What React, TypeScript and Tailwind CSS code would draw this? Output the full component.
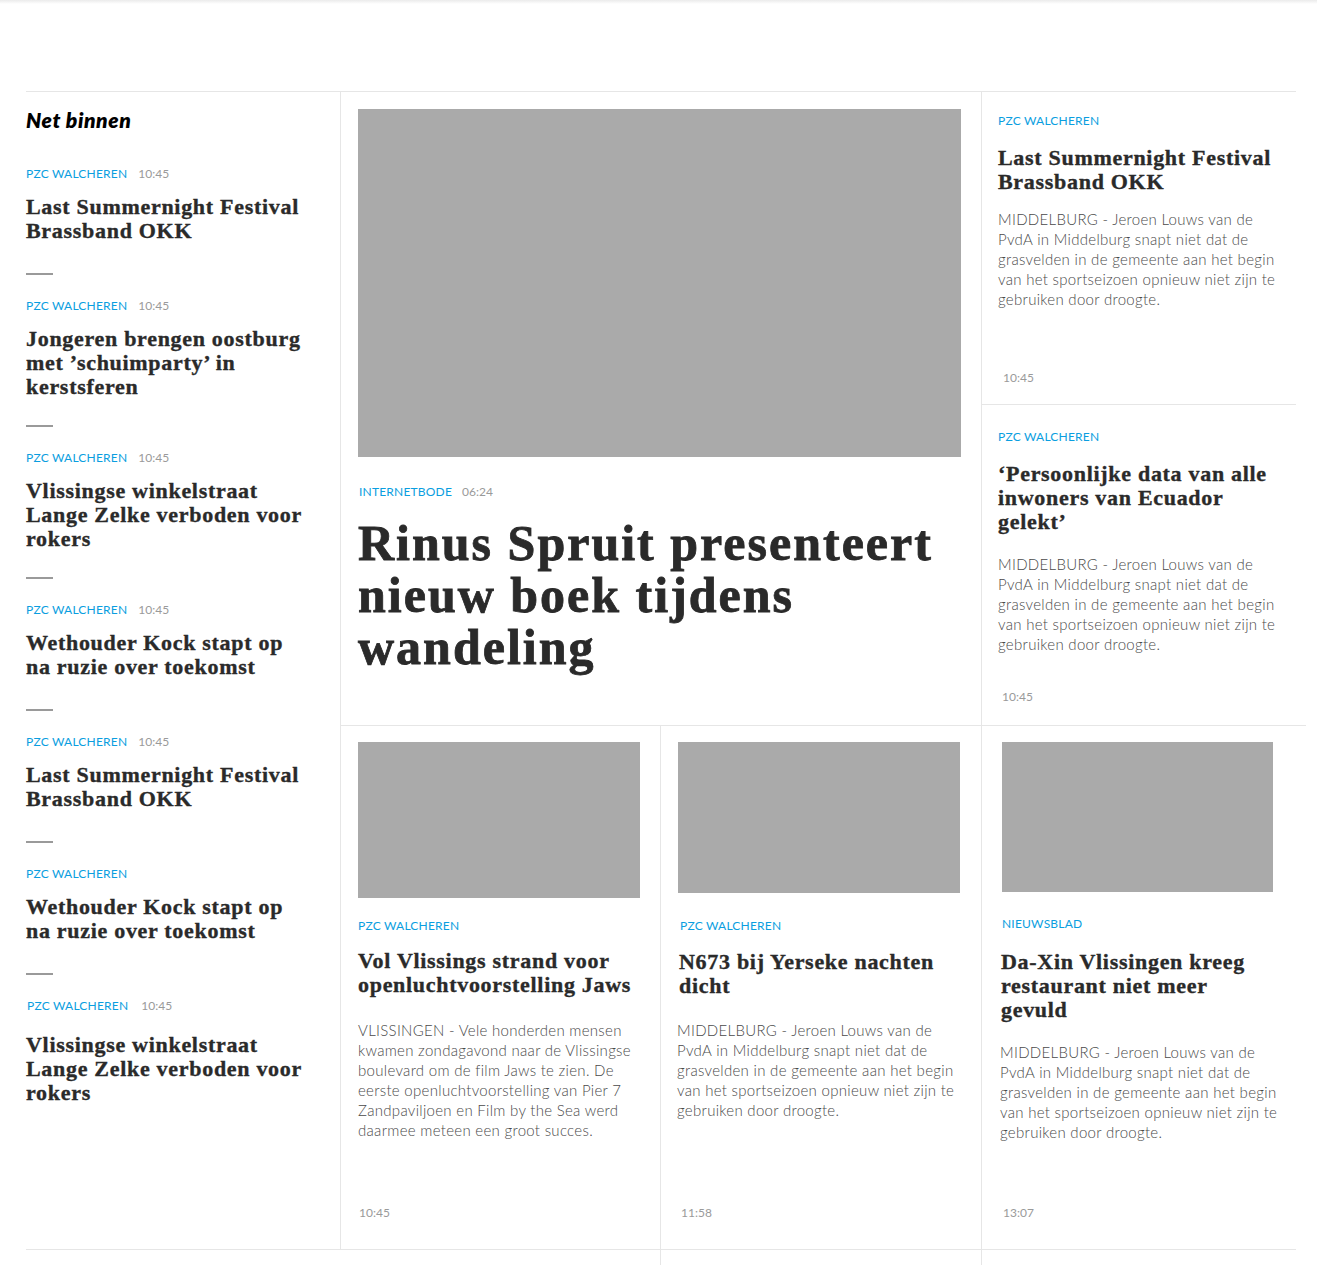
import React from "react";

const SERIF = "font-['Liberation_Serif',serif]";
const SANS = "font-['Lato',sans-serif]";

function Meta({ src, time, gap = "gap-[11px]" }: { src: string; time?: string; gap?: string }) {
  return (
    <div className={`flex items-center ${gap} h-4 leading-4 ${SANS}`}>
      <span className="text-[12px] tracking-[0.2px] text-[#0a9ee0] uppercase">{src}</span>
      {time && <span className="text-[12px] text-[#9a9a9a]">{time}</span>}
    </div>
  );
}

function Title({ lines, className = "" }: { lines: string[]; className?: string }) {
  return (
    <h3
      className={`${SERIF} font-bold text-[22px] leading-[24px] tracking-[0.7px] text-[#2a2a2a] [-webkit-text-stroke:0.35px_#2a2a2a] ${className}`}
    >
      {lines.map((l, i) => (
        <span key={i} className="block whitespace-nowrap">
          {l}
        </span>
      ))}
    </h3>
  );
}

function Body({ lines, className = "" }: { lines: string[]; className?: string }) {
  return (
    <p className={`${SANS} font-light text-[15px] leading-[20px] tracking-[0.3px] text-[#4a4a4a] ${className}`}>
      {lines.map((l, i) => (
        <span key={i} className="block whitespace-nowrap">
          {l}
        </span>
      ))}
    </p>
  );
}

function Time({ t, className = "" }: { t: string; className?: string }) {
  return <div className={`${SANS} text-[12px] leading-4 text-[#9a9a9a] ${className}`}>{t}</div>;
}

const MIDDEL = [
  "MIDDELBURG - Jeroen Louws van de",
  "PvdA in Middelburg snapt niet dat de",
  "grasvelden in de gemeente aan het begin",
  "van het sportseizoen opnieuw niet zijn te",
  "gebruiken door droogte.",
];

const LEFT: { time?: string; lines: string[]; titleMt?: string; dash: boolean }[] = [
  { time: "10:45", lines: ["Last Summernight Festival", "Brassband OKK"], dash: true },
  { time: "10:45", lines: ["Jongeren brengen oostburg", "met ’schuimparty’ in", "kerstsferen"], dash: true },
  { time: "10:45", lines: ["Vlissingse winkelstraat", "Lange Zelke verboden voor", "rokers"], dash: true },
  { time: "10:45", lines: ["Wethouder Kock stapt op", "na ruzie over toekomst"], dash: true },
  { time: "10:45", lines: ["Last Summernight Festival", "Brassband OKK"], dash: true },
  { lines: ["Wethouder Kock stapt op", "na ruzie over toekomst"], dash: true },
  { time: "10:45", lines: ["Vlissingse winkelstraat", "Lange Zelke verboden voor", "rokers"], titleMt: "mt-[19px]", dash: false },
];

export default function App() {
  return (
    <div className="min-h-screen w-full bg-white">
      <div className="h-[4px] bg-gradient-to-b from-[#ebebeb] to-white" />
      <div className="h-[87px]" />
      <div className="ml-[26px] mr-[21px] flex border-y border-[#e6e6e6]">
        {/* Left column */}
        <aside className="w-[315px] shrink-0 border-r border-[#e6e6e6] pt-[14px]">
          <h2 className={`${SANS} font-extrabold italic text-[21px] leading-[28px] tracking-[0.6px] text-black`}>Net binnen</h2>
          <div className="mt-[32px]">
            {LEFT.map((it, i) => (
              <div key={i}>
                <div className={i === LEFT.length - 1 ? "ml-[1px]" : ""}>
                  <Meta src="PZC WALCHEREN" time={it.time} gap={i === LEFT.length - 1 ? "gap-[13px]" : "gap-[11px]"} />
                </div>
                <Title lines={it.lines} className={`${it.titleMt ?? "mt-[13px]"} min-h-[52px]`} />
                {it.dash && <div className="mt-[26px] mb-[23px] h-[2px] w-[27px] bg-[#9a9a9a]" />}
              </div>
            ))}
          </div>
        </aside>

        {/* Right area */}
        <div className="flex-1 min-w-0">
          {/* top row */}
          <div className="flex h-[633px]">
            <div className="w-[640px] shrink-0 pl-[17px] pr-[20px] pt-[17px]">
              <div className="h-[348px] w-full bg-[#aaaaaa]" />
              <div className="mt-[27px] ml-[1px]">
                <Meta src="INTERNETBODE" time="06:24" gap="gap-[10px]" />
              </div>
              <h1
                className={`${SERIF} font-bold text-[50px] leading-[52px] tracking-[2px] text-[#2a2a2a] [-webkit-text-stroke:0.8px_#2a2a2a] mt-[17px]`}
              >
                <span className="block whitespace-nowrap">Rinus Spruit presenteert</span>
                <span className="block whitespace-nowrap">nieuw boek tijdens</span>
                <span className="block whitespace-nowrap">wandeling</span>
              </h1>
            </div>
            <div className="flex-1 flex flex-col border-l border-[#e6e6e6]">
              <div className="h-[313px] border-b border-[#e6e6e6] flex flex-col pl-[16px] pt-[21px] pb-[18px]">
                <Meta src="PZC WALCHEREN" />
                <Title lines={["Last Summernight Festival", "Brassband OKK"]} className="mt-[17px]" />
                <Body lines={MIDDEL} className="mt-[15px]" />
                <Time t="10:45" className="mt-auto ml-[5px]" />
              </div>
              <div className="flex-1 flex flex-col pl-[16px] pt-[24px] pb-[20px]">
                <Meta src="PZC WALCHEREN" />
                <Title lines={["‘Persoonlijke data van alle", "inwoners van Ecuador", "gelekt’"]} className="mt-[17px]" />
                <Body lines={MIDDEL} className="mt-[20px]" />
                <Time t="10:45" className="mt-auto ml-[4px]" />
              </div>
            </div>
          </div>

          {/* bottom row */}
          <div className="flex h-[524px] border-t border-[#e6e6e6] mr-[-10px] pr-[10px]">
            <div className="w-[319px] shrink-0 flex flex-col pl-[17px] pt-[16px] pb-[28px]">
              <div className="h-[156px] w-[282px] bg-[#aaaaaa]" />
              <div className="mt-[20px]">
                <Meta src="PZC WALCHEREN" />
              </div>
              <Title lines={["Vol Vlissings strand voor", "openluchtvoorstelling Jaws"]} className="mt-[15px]" />
              <Body
                lines={[
                  "VLISSINGEN - Vele honderden mensen",
                  "kwamen zondagavond naar de Vlissingse",
                  "boulevard om de film Jaws te zien. De",
                  "eerste openluchtvoorstelling van Pier 7",
                  "Zandpaviljoen en Film by the Sea werd",
                  "daarmee meteen een groot succes.",
                ]}
                className="mt-[23px]"
              />
              <Time t="10:45" className="mt-auto ml-[1px]" />
            </div>
            <div className="w-[321px] shrink-0 flex flex-col border-l border-[#e6e6e6] pl-[17px] pt-[16px] pb-[28px]">
              <div className="h-[151px] w-[282px] bg-[#aaaaaa]" />
              <div className="mt-[25px] ml-[2px]">
                <Meta src="PZC WALCHEREN" />
              </div>
              <Title lines={["N673 bij Yerseke nachten", "dicht"]} className="mt-[16px] ml-[1px]" />
              <Body lines={MIDDEL} className="mt-[22px] -ml-[1px]" />
              <Time t="11:58" className="mt-auto ml-[3px]" />
            </div>
            <div className="flex-1 flex flex-col border-l border-[#e6e6e6] pl-[20px] pt-[16px] pb-[28px]">
              <div className="h-[150px] w-[271px] bg-[#aaaaaa]" />
              <div className="mt-[24px]">
                <Meta src="NIEUWSBLAD" />
              </div>
              <Title lines={["Da-Xin Vlissingen kreeg", "restaurant niet meer", "gevuld"]} className="mt-[18px] -ml-[1px]" />
              <Body lines={MIDDEL} className="mt-[20px] -ml-[2px]" />
              <Time t="13:07" className="mt-auto ml-[1px]" />
            </div>
          </div>
        </div>
      </div>
      {/* continuation strip */}
      <div className="flex h-[16px]">
        <div className="w-[660px] shrink-0" />
        <div className="w-[321px] shrink-0 border-l border-[#e6e6e6]" />
        <div className="w-[315px] shrink-0 border-l border-[#e6e6e6]" />
      </div>
    </div>
  );
}
